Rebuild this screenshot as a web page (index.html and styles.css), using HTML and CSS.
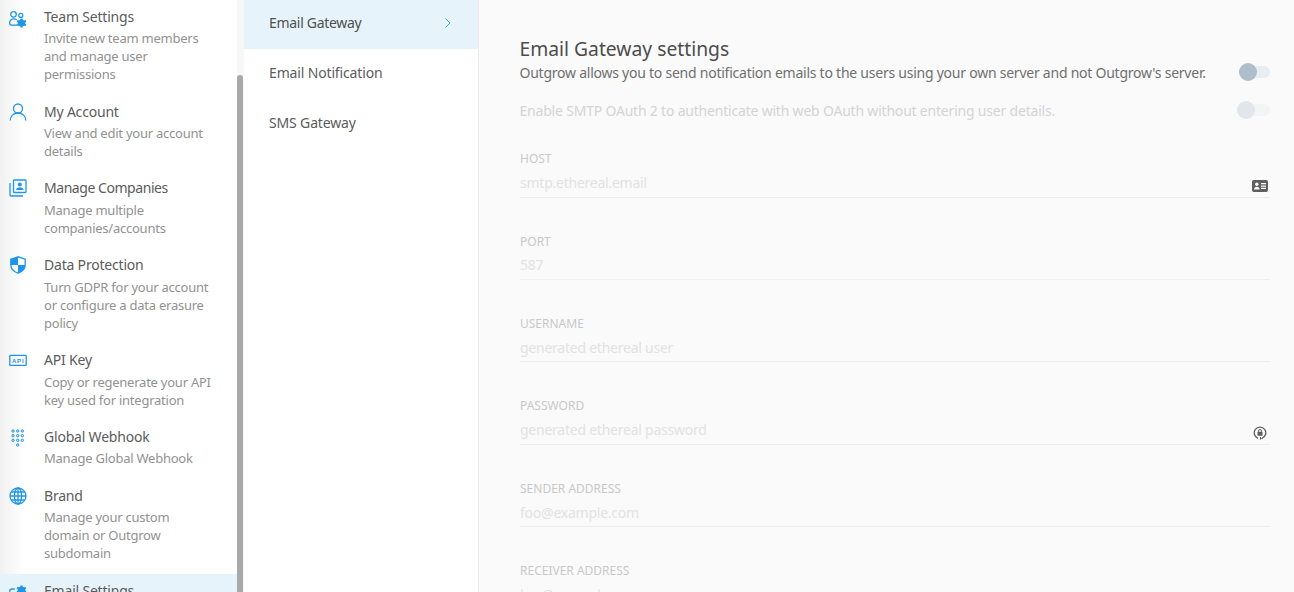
FILE: index.html
```html
<!DOCTYPE html>
<html lang="en">
<head>
<meta charset="utf-8">
<title>Email Gateway settings</title>
<link rel="stylesheet" href="styles.css">
</head>
<body>
<div class="app">
  <nav class="sidebar">
    <div class="item">
      <svg class="icon" viewBox="0 0 18 18"><circle cx="4.500" cy="6.400" r="2.800"/><circle cx="11.800" cy="7.400" r="2"/><path d="M8 17.200H3C1.500 17.200 .6 16.500 .6 15 .6 12.500 2.500 10.800 4.800 10.800c1.200 0 2.200.4 3 1"/><path class="fill" transform="translate(-1 1.500)" d="M12.500 9h2l.3 1.300 1.300.6 1.200-.6 1 1.700-1 .9v1.300l1 .9-1 1.700-1.200-.6-1.300.6-.3 1.300h-2l-.3-1.300-1.300-.6-1.200.6-1-1.700 1-.9v-1.300l-1-.9 1-1.700 1.200.6 1.300-.6z"/></svg>
      <div class="copy"><div class="name">Team Settings</div><div class="desc">Invite new team members<br>and manage user<br>permissions</div></div>
    </div>
    <div class="item">
      <svg class="icon" viewBox="0 0 18 18"><circle cx="9" cy="5.500" r="4.500"/><path d="M1.200 17.500c0-4.300 3.400-7.500 7.800-7.500s7.800 3.200 7.800 7.500"/></svg>
      <div class="copy"><div class="name">My Account</div><div class="desc">View and edit your account<br>details</div></div>
    </div>
    <div class="item">
      <svg class="icon" viewBox="0 0 18 18"><rect x="4.500" y="1" width="12.500" height="12.500" rx=".8"/><path d="M1 4v12c0 .6.400 1 1 1h12"/><circle class="fill" cx="10.800" cy="5.500" r="2"/><path class="fill" d="M7 11c.3-2 1.800-2.800 3.800-2.800s3.500.8 3.800 2.800z"/></svg>
      <div class="copy"><div class="name companies">Manage Companies</div><div class="desc">Manage multiple<br>companies/accounts</div></div>
    </div>
    <div class="item">
      <svg class="icon" viewBox="0 0 18 18"><path d="M9 .8 1.800 3.200v5.300c0 4 2.800 7.200 7.200 8.700 4.400-1.500 7.200-4.700 7.200-8.700V3.200z"/><path class="fill" d="M9 .8 1.800 3.200v5.800H9zM9 9v8.200c4.400-1.500 7.200-4.200 7.200-8.200z"/></svg>
      <div class="copy"><div class="name">Data Protection</div><div class="desc">Turn GDPR for your account<br>or configure a data erasure<br>policy</div></div>
    </div>
    <div class="item">
      <svg class="icon" viewBox="0 0 18 18"><rect x=".8" y="4.400" width="16.400" height="10" rx=".6"/><text class="api" x="9.200" y="11.900" text-anchor="middle">API</text></svg>
      <div class="copy"><div class="name">API Key</div><div class="desc">Copy or regenerate your API<br>key used for integration</div></div>
    </div>
    <div class="item">
      <svg class="icon" viewBox="0 0 18 18"><g class="dots"><circle cx="4" cy="3" r="1.200"/><circle cx="8.700" cy="3" r="1.200"/><circle cx="13.300" cy="3" r="1.200"/><circle cx="4" cy="7.700" r="1.200"/><circle cx="8.700" cy="7.700" r="1.200"/><circle cx="13.300" cy="7.700" r="1.200"/><circle cx="4" cy="12.300" r="1.200"/><circle cx="8.700" cy="12.300" r="1.200"/><circle cx="13.300" cy="12.300" r="1.200"/><circle cx="8.700" cy="17" r="1.200"/></g></svg>
      <div class="copy"><div class="name">Global Webhook</div><div class="desc">Manage Global Webhook</div></div>
    </div>
    <div class="item">
      <svg class="icon" viewBox="0 0 18 18"><circle cx="9" cy="9" r="8"/><ellipse cx="9" cy="9" rx="3.600" ry="8"/><path d="M9 1v16M1 9h16M2.200 5h13.600M2.200 13h13.600"/></svg>
      <div class="copy"><div class="name">Brand</div><div class="desc">Manage your custom<br>domain or Outgrow<br>subdomain</div></div>
    </div>
    <div class="item active">
      <svg class="icon" viewBox="0 0 18 18"><path d="M.8 10.500V9c0-1.500 1-2 2.500-2h2.500"/><path class="fill" transform="translate(0 3.400)" d="M11.500 0h2l.3 1.300 1.300.6 1.200-.6 1 1.700-1 .9v1.300l1 .9-1 1.700-1.200-.6-1.300.6-.3 1.300h-2l-.3-1.300-1.300-.6-1.200.6-1-1.700 1-.9V3.900l-1-.9 1-1.700 1.200.6 1.300-.6z"/></svg>
      <div class="copy"><div class="name">Email Settings</div></div>
    </div>
  </nav>
  <div class="scrollbar"><div class="thumb"></div></div>
  <div class="subnav">
    <div class="sub current">Email Gateway
      <svg class="chev" viewBox="0 0 8 12"><path d="M1.500 1.500 6 6l-4.500 4.500"/></svg>
    </div>
    <div class="sub">Email Notification</div>
    <div class="sub">SMS Gateway</div>
  </div>
  <main class="main">
    <h1 class="title">Email Gateway settings</h1>
    <div class="row">
      <span class="lead">Outgrow allows you to send notification emails to the users using your own server and not Outgrow's server.</span>
      <span class="toggle"><span class="knob"></span></span>
    </div>
    <div class="row second">
      <span class="lead faint">Enable SMTP OAuth 2 to authenticate with web OAuth without entering user details.</span>
      <span class="toggle wide dim"><span class="knob"></span></span>
    </div>
    <div class="fields">
      <div class="field"><div class="label">HOST</div><div class="value">smtp.ethereal.email
        <svg class="field-icon" viewBox="0 0 16 12"><rect x=".5" y=".5" width="15" height="11" rx="1" class="card"/><circle cx="4.800" cy="4.300" r="1.700" class="cut"/><path class="cut" d="M2 9.500c0-2 1.200-2.800 2.800-2.800s2.800.8 2.800 2.800z"/><path class="cut" d="M9 3h5v1.300H9zM9 5.400h5v1.300H9zM9 7.800h5v1.300H9z"/></svg></div></div>
      <div class="field"><div class="label">PORT</div><div class="value">587</div></div>
      <div class="field"><div class="label">USERNAME</div><div class="value">generated ethereal user</div></div>
      <div class="field"><div class="label">PASSWORD</div><div class="value">generated ethereal password
        <svg class="field-icon lock" viewBox="0 0 14 14"><path class="ring" d="M5 12.300A5.800 5.800 0 1 1 9 12.300"/><path class="dark" d="M7 10.800 9 12.500 7 14z"/><rect class="dark" x="4.500" y="5.800" width="5" height="4" rx=".6"/><path class="ring thin" d="M5.500 5.800V5a1.500 1.500 0 0 1 3 0v.8"/></svg></div></div>
      <div class="field"><div class="label">SENDER ADDRESS</div><div class="value">foo@example.com</div></div>
      <div class="field"><div class="label">RECEIVER ADDRESS</div><div class="value">bar@example.com</div></div>
    </div>
  </main>
</div>
</body>
</html>
```
FILE: styles.css
```css
* { box-sizing: border-box; }
html, body { margin: 0; height: 100%; overflow: hidden; }
body { font-family: "Noto Sans", "Open Sans", sans-serif; font-size: 14px; color: #5b5b5b; background: #fff; }
.app { display: flex; height: 592px; overflow: hidden; }
.sidebar { width: 237px; flex: none; height: 592px; overflow: hidden; background: linear-gradient(90deg, #f1f1f1 0, #fff 24px); }
.item { display: flex; padding: 6.700px 0 11.300px 9px; }
.item.active { background: #e6f3fb; }
.icon { width: 18px; height: 18px; flex: none; margin-top: 1px; fill: none; stroke: #2196e8; stroke-width: 1.300; overflow: visible; }
.icon .fill { fill: #2196e8; stroke: none; }
.icon .dots circle { fill: #cfe8fa; stroke-width: 1; }
.icon .api { font-family: "Liberation Sans", sans-serif; font-size: 6px; font-weight: 700; fill: #2196e8; stroke: none; letter-spacing: .8px; }
.copy { margin-left: 17px; }
.name { font-size: 14px; line-height: 19.600px; color: #5c5c5c; letter-spacing: -.2px; }
.name.companies { letter-spacing: -.45px; }
.desc { margin-top: 2.800px; font-size: 13px; line-height: 18.200px; color: #929292; letter-spacing: -.24px; }
.scrollbar { width: 7px; flex: none; height: 592px; background: #f7f7f7; padding-top: 75px; }
.thumb { width: 6px; height: 517px; background: #a9a9a9; border-radius: 3px 3px 0 0; }
.subnav { width: 235px; flex: none; height: 592px; background: #fff; border-right: 1px solid #ececec; }
.sub { height: 50px; padding: 13px 25px 0; line-height: 20px; font-size: 14px; color: #5c5c5c; position: relative; letter-spacing: -.15px; }
.sub.current { height: 49px; margin-bottom: 1px; background: #e6f3fb; color: #4f4f4f; letter-spacing: -.3px; }
.chev { position: absolute; left: 200px; top: 17px; width: 8px; height: 12px; fill: none; stroke: #3ea2e6; stroke-width: 1; }
.main { flex: 1; height: 592px; overflow: hidden; background: #fafafa; padding: 37px 24px 0 41px; }
.title { margin: 0 0 0 -.5px; font-size: 19.300px; font-weight: 400; line-height: 24px; color: #4c4c4c; }
.row { display: flex; justify-content: space-between; align-items: center; margin-top: 2px; height: 20px; }
.row.second { margin-top: 18px; }
.lead { margin-left: -.5px; font-size: 14px; line-height: 20px; color: #707070; white-space: nowrap; letter-spacing: -.24px; }
.lead.faint { color: #d4d4d4; letter-spacing: -.2px; }
.toggle { display: block; width: 31px; height: 12px; border-radius: 6px; background: #e8edf1; position: relative; margin-top: -2px; }
.toggle.wide { width: 33px; background: #f2f4f5; }
.knob { position: absolute; left: 0; top: -3px; width: 18px; height: 18px; border-radius: 50%; background: #afbecb; }
.dim .knob { background: #e0e6eb; }
.fields { margin-top: 29.200px; }
.field { height: 82.400px; padding-top: 1px; }
.label { font-size: 12px; line-height: 16px; color: #c9c9c9; }
.value { position: relative; margin-top: 5.800px; height: 24.600px; line-height: 20px; font-size: 14px; color: #e2e2e2; border-bottom: 1px solid #eeeeee; letter-spacing: -.24px; }
.field-icon { position: absolute; right: 2px; top: 7px; width: 16px; height: 12px; }
.card { fill: #5f5f5f; stroke: #5f5f5f; }
.cut { fill: #fafafa; }
.lock { right: 3px; top: 6px; width: 14px; height: 14px; }
.ring { fill: none; stroke: #5f5f5f; stroke-width: 1.300; }
.thin { stroke-width: 1; }
.dark { fill: #5f5f5f; }
```
